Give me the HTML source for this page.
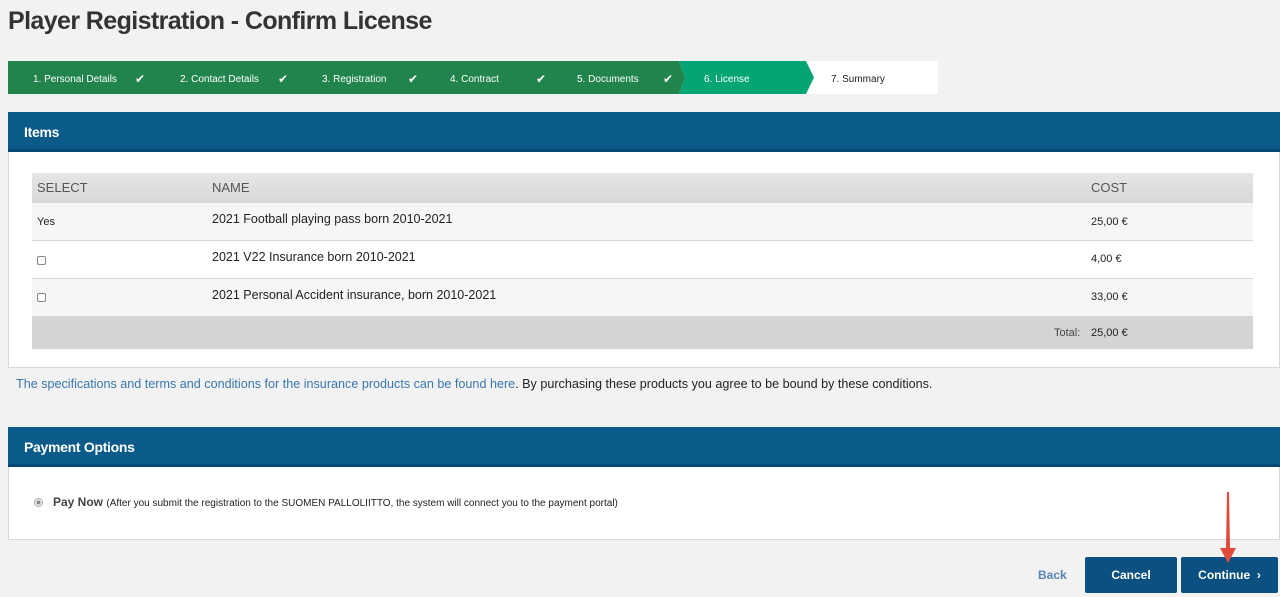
<!DOCTYPE html>
<html><head><style>
*{box-sizing:border-box;margin:0;padding:0}
body{width:1280px;height:597px;background:#f2f2f2;font-family:"Liberation Sans",sans-serif;position:relative;overflow:hidden;color:#222}
.abs{position:absolute}
h1{position:absolute;left:8px;top:7px;font-size:25px;font-weight:bold;color:#333;letter-spacing:-0.6px}
.steps{left:8px;top:61px;width:930px;height:33px;background:#fff}
.st{position:absolute;top:2px;height:33px;line-height:33px;font-size:10px;color:#fff}
.ph{left:8px;width:1272px;height:40px;background:#0a5a8a;border-bottom:3px solid #064a73;color:#fff;font-weight:bold;font-size:14px;line-height:40px;padding-left:16px;letter-spacing:-0.3px}
.pb{left:8px;width:1272px;background:#fff;border:1px solid #d8d8d8;border-top:none}
.tr{position:absolute;left:32px;width:1221px;border-bottom:1px solid #d6d6d6;font-size:12px}
.cb{position:absolute;left:5px;width:9px;height:9px;border:1px solid #888;border-radius:2px;background:#fff}
.btn{position:absolute;top:557px;height:36px;background:#0a5080;color:#fff;font-weight:bold;font-size:12px;text-align:center;line-height:36px;border-radius:2px}
</style></head><body>
<h1>Player Registration - Confirm License</h1>
<div class="abs steps">
<div class="abs" style="left:0;top:0;width:671px;height:33px;background:#21844d"></div>
<svg class="abs" style="left:671px;top:0" width="135" height="33"><polygon points="0,0 127,0 135,16.5 127,33 0,33 6,16.5" fill="#04a574"/><polygon points="0,0 6,16.5 0,33" fill="#21844d"/></svg>
<div class="st" style="left:25px">1. Personal Details</div><div class="st" style="left:127px;font-size:12px">✔</div>
<div class="st" style="left:172px">2. Contact Details</div><div class="st" style="left:270px;font-size:12px">✔</div>
<div class="st" style="left:314px">3. Registration</div><div class="st" style="left:400px;font-size:12px">✔</div>
<div class="st" style="left:442px">4. Contract</div><div class="st" style="left:528px;font-size:12px">✔</div>
<div class="st" style="left:569px">5. Documents</div><div class="st" style="left:655px;font-size:12px">✔</div>
<div class="st" style="left:696px">6. License</div>
<div class="st" style="left:823px;color:#222">7. Summary</div>
</div>
<div class="abs ph" style="top:112px">Items</div>
<div class="abs pb" style="top:152px;height:216px"></div>
<div class="tr" style="top:173px;height:30px;background:linear-gradient(#e6e6e6,#d8d8d8);border:none;font-size:13px;color:#555;line-height:29px"><span class="abs" style="left:5px">SELECT</span><span class="abs" style="left:180px">NAME</span><span class="abs" style="left:1059px">COST</span></div>
<div class="tr" style="top:203px;height:38px;background:#f6f6f6"><span class="abs" style="left:5px;top:13px;font-size:11px">Yes</span><span class="abs" style="left:180px;top:9px;font-size:12.5px">2021 Football playing pass born 2010-2021</span><span class="abs" style="left:1059px;top:13px;font-size:11px">25,00 €</span></div>
<div class="tr" style="top:241px;height:38px;background:#fff"><span class="cb" style="top:15px"></span><span class="abs" style="left:180px;top:9px;font-size:12.5px">2021 V22 Insurance born 2010-2021</span><span class="abs" style="left:1059px;top:12px;font-size:11px">4,00 €</span></div>
<div class="tr" style="top:279px;height:38px;background:#f6f6f6"><span class="cb" style="top:14px"></span><span class="abs" style="left:180px;top:9px;font-size:12.5px">2021 Personal Accident insurance, born 2010-2021</span><span class="abs" style="left:1059px;top:12px;font-size:11px">33,00 €</span></div>
<div class="tr" style="top:317px;height:32px;background:#d4d4d4;border:none;font-size:11px"><span class="abs" style="left:1022px;top:10px;color:#444">Total:</span><span class="abs" style="left:1059px;top:10px">25,00 €</span></div>
<div class="abs" style="left:16px;top:377px;font-size:12.6px;white-space:nowrap"><span style="color:#3a77b0">The specifications and terms and conditions for the insurance products can be found here</span>. By purchasing these products you agree to be bound by these conditions.</div>
<div class="abs ph" style="top:427px">Payment Options</div>
<div class="abs pb" style="top:467px;height:73px"></div>
<div class="abs" style="left:34px;top:498px;width:9px;height:9px;border-radius:50%;border:1px solid #aaa;background:radial-gradient(#888 35%,#eee 45%)"></div>
<div class="abs" style="left:53px;top:495px;font-size:12px;white-space:nowrap"><b style="color:#444">Pay Now</b> <span style="font-size:10px">(After you submit the registration to the SUOMEN PALLOLIITTO, the system will connect you to the payment portal)</span></div>
<div class="abs" style="left:1038px;top:568px;font-size:12px;font-weight:bold;color:#5a85b5">Back</div>
<div class="btn" style="left:1085px;width:92px">Cancel</div>
<div class="btn" style="left:1181px;width:97px">Continue &nbsp;›</div>
<svg class="abs" style="left:1218px;top:492px" width="20" height="72"><polygon points="9,0 11,0 12,56 18,56 10,71 2,56 8,56" fill="#e04a3a"/></svg>
</body></html>
